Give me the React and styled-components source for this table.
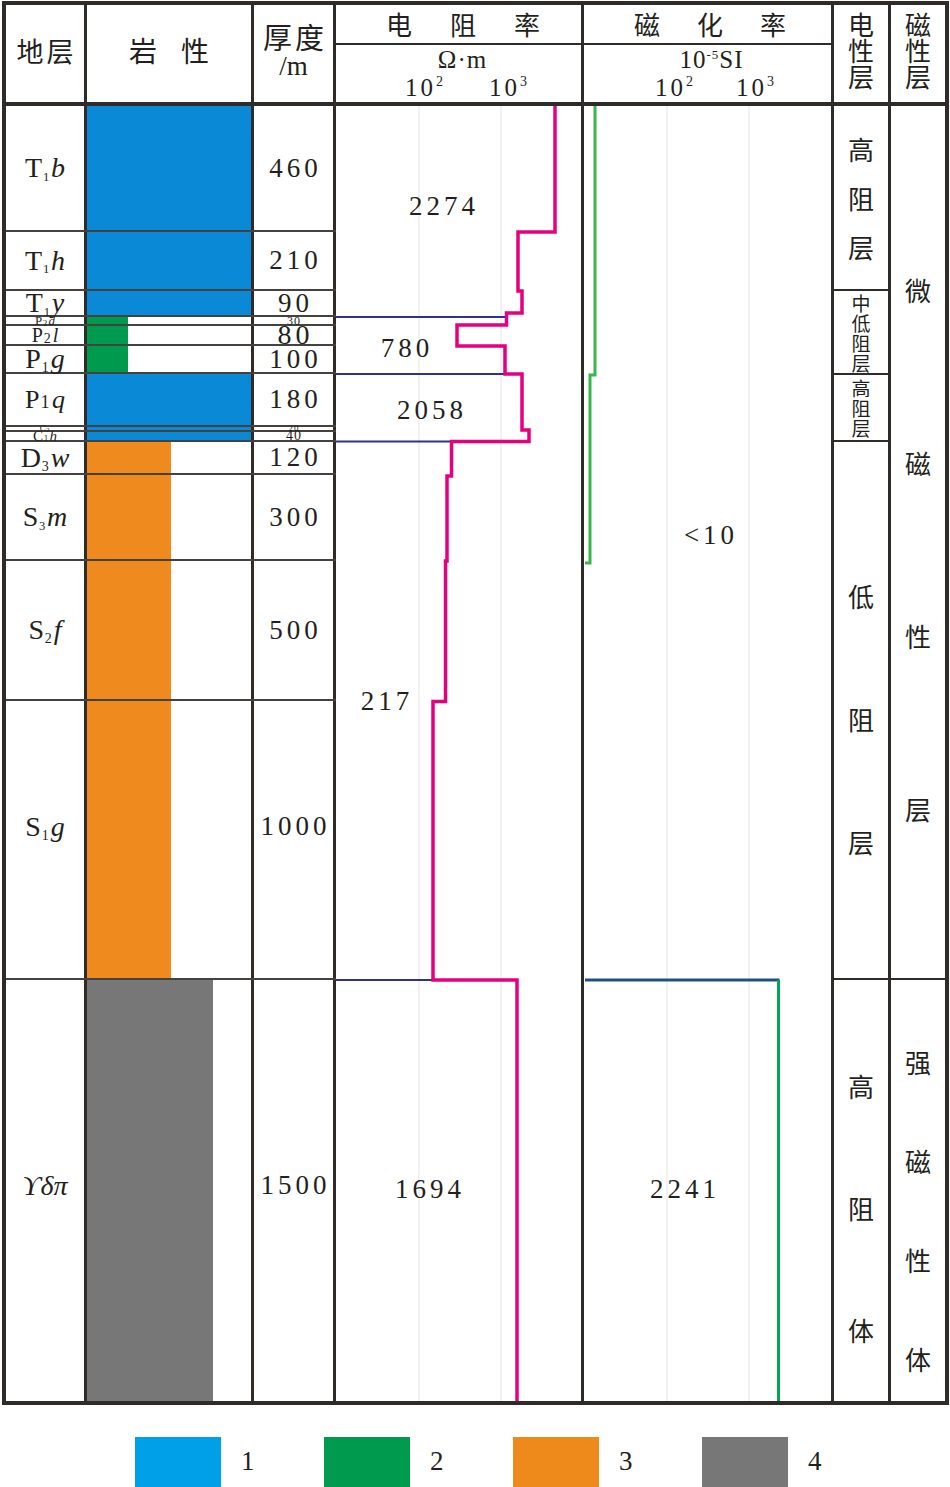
import React from 'react';
import styled, { createGlobalStyle } from 'styled-components';

const SERIF = '"Liberation Serif", "Times New Roman", serif';
const CJK = '"Noto Sans CJK SC", "Noto Sans", sans-serif';
const INK = '#231f20';
const RULE = '#2f2b29';
const THIN = '#45413f';

const GlobalStyle = createGlobalStyle`
  html, body {
    margin: 0;
    padding: 0;
    background: #fff;
  }
  body {
    width: 950px;
    height: 1487px;
    overflow: hidden;
    color: ${INK};
    font-family: ${SERIF};
  }
`;

const Page = styled.div`
  padding: 1px 0 0 2px;
`;

const Table = styled.div`
  width: 947px;
  box-sizing: border-box;
  border: 4px solid ${RULE};
`;

/* ---------- header ---------- */

const HeaderRow = styled.div`
  display: flex;
  height: 97px;
  border-bottom: 4px solid ${RULE};
`;

const HeadCell = styled.div`
  flex: none;
  width: ${(p) => p.$w}px;
  border-right: ${(p) => (p.$last ? 0 : 3)}px solid ${RULE};
  display: flex;
  flex-direction: column;
  align-items: center;
  justify-content: center;
  padding-bottom: ${(p) => p.$pb || 0}px;
`;

const HeadSplitCell = styled.div`
  flex: none;
  width: ${(p) => p.$w}px;
  border-right: 3px solid ${RULE};
  display: flex;
  flex-direction: column;
`;

const HeadTitle = styled.div`
  font-family: ${CJK};
  font-size: ${(p) => p.$size || 27}px;
  line-height: ${(p) => p.$lh || p.$size || 27}px;
  letter-spacing: ${(p) => p.$ls || 0}px;
  margin-right: -${(p) => p.$ls || 0}px;
  white-space: nowrap;
`;

const HeadUnit = styled.div`
  font-family: ${SERIF};
  font-size: 27px;
  line-height: 30px;
`;

const SplitTop = styled.div`
  height: 38px;
  border-bottom: 2.5px solid ${RULE};
  display: flex;
  align-items: center;
  justify-content: center;
  gap: ${(p) => p.$gap}px;
  padding-left: ${(p) => p.$pl}px;
  font-family: ${CJK};
  font-size: 26px;
  line-height: 26px;
`;

const SplitBottom = styled.div`
  flex: 1;
  padding-top: 3px;
  display: flex;
  flex-direction: column;
`;

const UnitLine = styled.div`
  height: 24px;
  line-height: 24px;
  font-size: 25px;
  text-align: center;
  padding-left: ${(p) => p.$pl || 0}px;
  letter-spacing: 1px;

  sup {
    font-size: 13px;
    vertical-align: 9px;
    line-height: 0;
  }
`;

const ScaleRow = styled.div`
  margin-top: 4px;
  height: 24px;
  display: flex;
  padding-left: ${(p) => p.$pl}px;
  gap: ${(p) => p.$gap}px;
`;

const ScaleLabel = styled.span`
  font-size: 25px;
  line-height: 24px;
  letter-spacing: 3px;
  white-space: nowrap;

  sup {
    font-size: 14px;
    vertical-align: 10px;
    line-height: 0;
  }
`;

const VerticalHead = styled.div`
  display: flex;
  flex-direction: column;
  align-items: center;
  font-family: ${CJK};
  font-size: 26px;
  line-height: 26px;
`;

/* ---------- body ---------- */

const Body = styled.div`
  display: flex;
  height: 1295px;
`;

const StrataBlock = styled.div`
  display: flex;
  flex-direction: column;
`;

const Row = styled.div`
  display: flex;
  height: ${(p) => p.$h}px;
  box-sizing: border-box;
  border-bottom: ${(p) => (p.$last ? 0 : 2)}px solid ${THIN};
`;

const NameCell = styled.div`
  flex: none;
  width: 78px;
  border-right: 3px solid ${RULE};
  display: flex;
  align-items: center;
  justify-content: center;
  font-size: ${(p) => p.$size}px;
  line-height: 1;
  white-space: nowrap;
  padding-bottom: ${(p) => p.$lift || 0}px;
`;

const NameText = styled.span`
  display: inline-block;
  line-height: 1;

  i {
    font-style: italic;
  }
`;

const Sub = styled.span`
  font-size: ${(p) => p.$scale || 0.45}em;
  vertical-align: ${(p) => p.$drop ?? -0.3}em;
  line-height: 0;
  margin: 0 0.14em 0 0.06em;
`;

const LithCell = styled.div`
  flex: none;
  width: 164px;
  border-right: 3px solid ${RULE};
  display: flex;
`;

const LithFill = styled.div`
  width: ${(p) => p.$w}px;
  background: ${(p) => p.$color};
`;

const ThickCell = styled.div`
  flex: none;
  border-right: 3px solid ${RULE};
  display: flex;
  align-items: center;
  justify-content: center;
  font-size: ${(p) => p.$size}px;
  letter-spacing: ${(p) => (p.$size > 20 ? 4 : 1)}px;
  padding-left: ${(p) => (p.$size > 20 ? 4 : 1)}px;
  width: ${(p) => (p.$size > 20 ? 75 : 78)}px;
  line-height: 1;
  white-space: nowrap;
  padding-bottom: ${(p) => p.$lift || 0}px;
`;

const ChartPanel = styled.div`
  flex: none;
  width: ${(p) => p.$w}px;
  border-right: 3px solid ${RULE};

  svg {
    display: block;
  }
`;

const LayerColumn = styled.div`
  flex: none;
  width: 54px;
  border-right: ${(p) => (p.$last ? 0 : 3)}px solid ${RULE};
  display: flex;
  flex-direction: column;
`;

const Section = styled.div`
  height: ${(p) => p.$h}px;
  box-sizing: border-box;
  border-bottom: ${(p) => (p.$last ? 0 : 2)}px solid ${RULE};
  display: flex;
  flex-direction: column;
  align-items: center;
  justify-content: center;
  gap: ${(p) => p.$gap}px;
  padding-top: ${(p) => Math.max(0, p.$shift * 2)}px;
  padding-bottom: ${(p) => Math.max(0, -p.$shift * 2)}px;
  font-family: ${CJK};
  font-size: ${(p) => p.$size}px;
  line-height: ${(p) => p.$size}px;
`;

/* ---------- legend ---------- */

const Legend = styled.div`
  display: flex;
  margin-top: 32px;
  padding-left: 133px;
`;

const LegendItem = styled.div`
  flex: none;
  width: 189px;
  display: flex;
  align-items: flex-start;
`;

const Swatch = styled.div`
  width: 86px;
  height: 60px;
  background: ${(p) => p.$color};
`;

const LegendLabel = styled.span`
  margin-left: 20px;
  margin-top: 11px;
  font-size: 27px;
  line-height: 27px;
`;

/* ---------- data ---------- */

const COLORS = {
  blue: '#0a8ad6',
  green: '#009a4e',
  orange: '#ee8a1e',
  gray: '#777777',
};

const STRATA = [
  { h: 126, name: <>T<Sub>1</Sub><i>b</i></>, size: 28, thick: '460', ts: 27, fill: 'blue', fw: 164 },
  { h: 59, name: <>T<Sub>1</Sub><i>h</i></>, size: 28, thick: '210', ts: 27, fill: 'blue', fw: 164 },
  { h: 26, name: <>T<Sub>1</Sub><i>y</i></>, size: 28, thick: '90', ts: 27, fill: 'blue', fw: 164 },
  { h: 9, name: <>P<Sub $scale={0.7} $drop={-0.1}>2</Sub><i>d</i></>, size: 13, thick: '30', ts: 12, fill: 'green', fw: 41 },
  { h: 20, name: <>P<Sub $scale={0.7} $drop={-0.1}>2</Sub><i>l</i></>, size: 20, thick: '80', ts: 28, fill: 'green', fw: 41 },
  { h: 28, name: <>P<Sub $scale={0.5}>1</Sub><i>g</i></>, size: 28, thick: '100', ts: 27, fill: 'green', fw: 41 },
  { h: 53, name: <>P<Sub $scale={0.7} $drop={0}>1</Sub><i>q</i></>, size: 26, thick: '180', ts: 27, fill: 'blue', fw: 164 },
  { h: 5, name: <>C<Sub $scale={0.7} $drop={-0.1}>2</Sub></>, size: 9, thick: '20', ts: 9, fill: 'blue', fw: 164 },
  { h: 10, name: <>C<Sub $scale={0.6} $drop={-0.1}>1</Sub><i>h</i></>, size: 15, thick: '40', ts: 14, fill: 'blue', fw: 164 },
  { h: 33, name: <>D<Sub $scale={0.5}>3</Sub><i>w</i></>, size: 28, thick: '120', ts: 27, fill: 'orange', fw: 84 },
  { h: 86, name: <>S<Sub $scale={0.45}>3</Sub><i>m</i></>, size: 28, thick: '300', ts: 27, fill: 'orange', fw: 84 },
  { h: 140, name: <>S<Sub $scale={0.5}>2</Sub><i>f</i></>, size: 28, thick: '500', ts: 27, fill: 'orange', fw: 84 },
  { h: 279, name: <>S<Sub $scale={0.5}>1</Sub><i>g</i></>, size: 28, thick: '1000', ts: 27, fill: 'orange', fw: 84, lift: 26 },
  { h: 421, name: <i>ϒδπ</i>, size: 28, thick: '1500', ts: 27, fill: 'gray', fw: 126, lift: 10 },
];

const ELEC = [
  { h: 185, text: '高阻层', size: 26, gap: 23, shift: 0 },
  { h: 84, text: '中低阻层', size: 19, gap: 1, shift: 0 },
  { h: 67, text: '高阻层', size: 19, gap: 1, shift: 0 },
  { h: 538, text: '低阻层', size: 26, gap: 97, shift: 9 },
  { h: 421, text: '高阻体', size: 26, gap: 96, shift: 17 },
];

const MAG = [
  { h: 874, text: '微磁性层', size: 26, gap: 147, shift: 7 },
  { h: 421, text: '强磁性体', size: 26, gap: 73, shift: 20 },
];

const LEGEND = [
  { n: '1', color: '#00a0e9' },
  { n: '2', color: '#009a4e' },
  { n: '3', color: '#ee8a1c' },
  { n: '4', color: '#777777' },
];

const RES_PATH =
  'M555,106 V232 H518 V291 H522 V313 H506.5 V325 H457 V346 H505 V374 H522 V430 H529 V441.5 H451.5 V476 H447 V561 H445.5 V701.5 H433 V980 H517 V1401';

const labelProps = {
  fontFamily: '"Liberation Serif", "Times New Roman", serif',
  fontSize: 27,
  letterSpacing: 4,
  fill: INK,
  textAnchor: 'middle',
  dominantBaseline: 'central',
};

const ResistivityChart = () => (
  <svg width="245" height="1295" viewBox="336 106 245 1295">
    <line x1="419" y1="106" x2="419" y2="1401" stroke="#e4e4e4" strokeWidth="1" />
    <line x1="501" y1="106" x2="501" y2="1401" stroke="#e4e4e4" strokeWidth="1" />
    <g stroke="#2e3192" strokeWidth="1.8">
      <line x1="336" y1="317" x2="506.5" y2="317" />
      <line x1="336" y1="374" x2="505" y2="374" />
      <line x1="336" y1="441.5" x2="451.5" y2="441.5" />
      <line x1="336" y1="980" x2="433" y2="980" />
    </g>
    <path d={RES_PATH} fill="none" stroke="#e4007f" strokeWidth="3.5" />
    <text x="444" y="206" {...labelProps}>2274</text>
    <text x="407" y="348" {...labelProps}>780</text>
    <text x="432" y="410" {...labelProps}>2058</text>
    <text x="387" y="701" {...labelProps}>217</text>
    <text x="430" y="1189" {...labelProps}>1694</text>
  </svg>
);

const MagneticChart = () => (
  <svg width="247" height="1295" viewBox="584 106 247 1295">
    <line x1="667" y1="106" x2="667" y2="1401" stroke="#e4e4e4" strokeWidth="1" />
    <line x1="749" y1="106" x2="749" y2="1401" stroke="#e4e4e4" strokeWidth="1" />
    <path d="M595,106 V375 H590 V563 H585" fill="none" stroke="#39b54a" strokeWidth="3" />
    <line x1="585" y1="980" x2="779.5" y2="980" stroke="#22507d" strokeWidth="3" />
    <line x1="778.5" y1="980" x2="778.5" y2="1401" stroke="#00a651" strokeWidth="3" />
    <text x="711" y="535" {...labelProps}>{'<10'}</text>
    <text x="685" y="1189" {...labelProps}>2241</text>
  </svg>
);

const Chars = ({ text }) => [...text].map((c, i) => <span key={i}>{c}</span>);

export default function App() {
  return (
    <>
      <GlobalStyle />
      <Page>
        <Table>
          <HeaderRow>
            <HeadCell $w={78} $pb={7}>
              <HeadTitle $size={27} $ls={3}>地层</HeadTitle>
            </HeadCell>
            <HeadCell $w={164} $pb={7}>
              <HeadTitle $size={28} $ls={24}>岩性</HeadTitle>
            </HeadCell>
            <HeadCell $w={79} $pb={5}>
              <HeadTitle $size={29} $lh={30} $ls={3}>厚度</HeadTitle>
              <HeadUnit>/m</HeadUnit>
            </HeadCell>
            <HeadSplitCell $w={245}>
              <SplitTop $gap={38} $pl={9}>
                <Chars text="电阻率" />
              </SplitTop>
              <SplitBottom>
                <UnitLine $pl={8}>Ω·m</UnitLine>
                <ScaleRow $pl={69} $gap={43}>
                  <ScaleLabel>10<sup>2</sup></ScaleLabel>
                  <ScaleLabel>10<sup>3</sup></ScaleLabel>
                </ScaleRow>
              </SplitBottom>
            </HeadSplitCell>
            <HeadSplitCell $w={247}>
              <SplitTop $gap={37} $pl={5}>
                <Chars text="磁化率" />
              </SplitTop>
              <SplitBottom>
                <UnitLine $pl={8}>10<sup>-5</sup>SI</UnitLine>
                <ScaleRow $pl={71} $gap={40}>
                  <ScaleLabel>10<sup>2</sup></ScaleLabel>
                  <ScaleLabel>10<sup>3</sup></ScaleLabel>
                </ScaleRow>
              </SplitBottom>
            </HeadSplitCell>
            <HeadCell $w={54} $pb={7}>
              <VerticalHead>
                <Chars text="电性层" />
              </VerticalHead>
            </HeadCell>
            <HeadCell $w={54} $pb={7} $last>
              <VerticalHead>
                <Chars text="磁性层" />
              </VerticalHead>
            </HeadCell>
          </HeaderRow>

          <Body>
            <StrataBlock>
              {STRATA.map((s, i) => (
                <Row key={i} $h={s.h} $last={i === STRATA.length - 1}>
                  <NameCell $size={s.size} $lift={s.lift}>
                    <NameText>{s.name}</NameText>
                  </NameCell>
                  <LithCell>
                    <LithFill $w={s.fw} $color={COLORS[s.fill]} />
                  </LithCell>
                  <ThickCell $size={s.ts} $lift={s.lift}>{s.thick}</ThickCell>
                </Row>
              ))}
            </StrataBlock>

            <ChartPanel $w={245}>
              <ResistivityChart />
            </ChartPanel>
            <ChartPanel $w={247}>
              <MagneticChart />
            </ChartPanel>

            <LayerColumn>
              {ELEC.map((s, i) => (
                <Section
                  key={i}
                  $h={s.h}
                  $size={s.size}
                  $gap={s.gap}
                  $shift={s.shift}
                  $last={i === ELEC.length - 1}
                >
                  <Chars text={s.text} />
                </Section>
              ))}
            </LayerColumn>
            <LayerColumn $last>
              {MAG.map((s, i) => (
                <Section
                  key={i}
                  $h={s.h}
                  $size={s.size}
                  $gap={s.gap}
                  $shift={s.shift}
                  $last={i === MAG.length - 1}
                >
                  <Chars text={s.text} />
                </Section>
              ))}
            </LayerColumn>
          </Body>
        </Table>

        <Legend>
          {LEGEND.map((l) => (
            <LegendItem key={l.n}>
              <Swatch $color={l.color} />
              <LegendLabel>{l.n}</LegendLabel>
            </LegendItem>
          ))}
        </Legend>
      </Page>
    </>
  );
}
